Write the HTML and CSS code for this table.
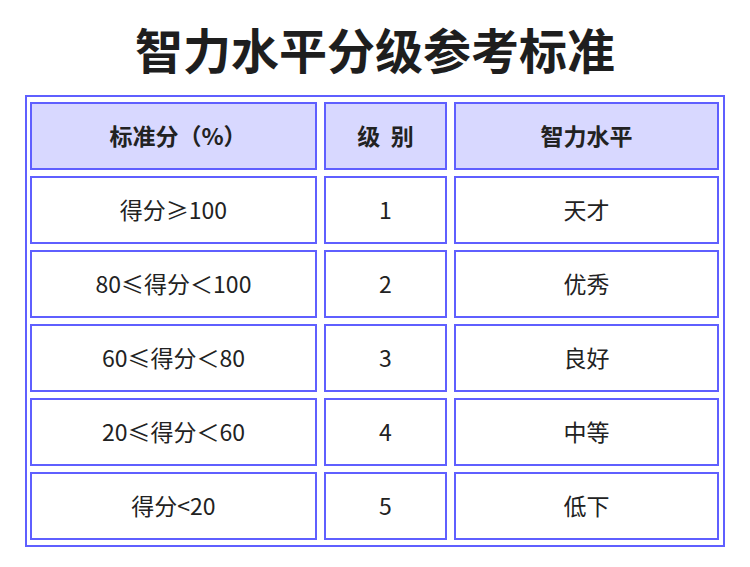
FILE: index.html
```html
<!DOCTYPE html>
<html lang="zh-CN">
<head>
<meta charset="utf-8">
<title>智力水平分级参考标准</title>
<link rel="stylesheet" href="styles.css">
</head>
<body>
<h1 class="title">智力水平分级参考标准</h1>
<div class="grid">
  <div class="cell head head-score">标准分（%）</div>
  <div class="cell head">级&nbsp;&nbsp;别</div>
  <div class="cell head">智力水平</div>

  <div class="cell">得分≥100</div>
  <div class="cell">1</div>
  <div class="cell">天才</div>

  <div class="cell">80≤得分＜100</div>
  <div class="cell">2</div>
  <div class="cell">优秀</div>

  <div class="cell">60≤得分＜80</div>
  <div class="cell">3</div>
  <div class="cell">良好</div>

  <div class="cell">20≤得分＜60</div>
  <div class="cell">4</div>
  <div class="cell">中等</div>

  <div class="cell">得分&lt;20</div>
  <div class="cell">5</div>
  <div class="cell">低下</div>
</div>
</body>
</html>
```

FILE: styles.css
```css
html, body {
  margin: 0;
  padding: 0;
  background: #ffffff;
}

body {
  font-family: "Noto Sans CJK SC", "Noto Sans", sans-serif;
  color: #222222;
}

.title {
  margin: 0;
  padding-top: 19px;
  height: 76px;
  line-height: 58px;
  font-size: 48px;
  font-weight: 700;
  text-align: center;
  color: #1e1e1e;
}

.grid {
  box-sizing: border-box;
  width: 700px;
  margin-left: 25px;
  border: 2px solid #5f5fff;
  padding: 5px 4px 5px 3px;
  display: grid;
  grid-template-columns: 287px 123px 265px;
  grid-auto-rows: 68px;
  column-gap: 7px;
  row-gap: 6px;
}

.cell {
  box-sizing: border-box;
  border: 2px solid #5f5fff;
  padding-bottom: 3px;
  display: flex;
  align-items: center;
  justify-content: center;
  font-size: 23px;
  color: #222222;
  white-space: nowrap;
}

.head {
  background: #d8d8ff;
  font-weight: 700;
}

.head-score {
  padding-left: 9px;
}
```
